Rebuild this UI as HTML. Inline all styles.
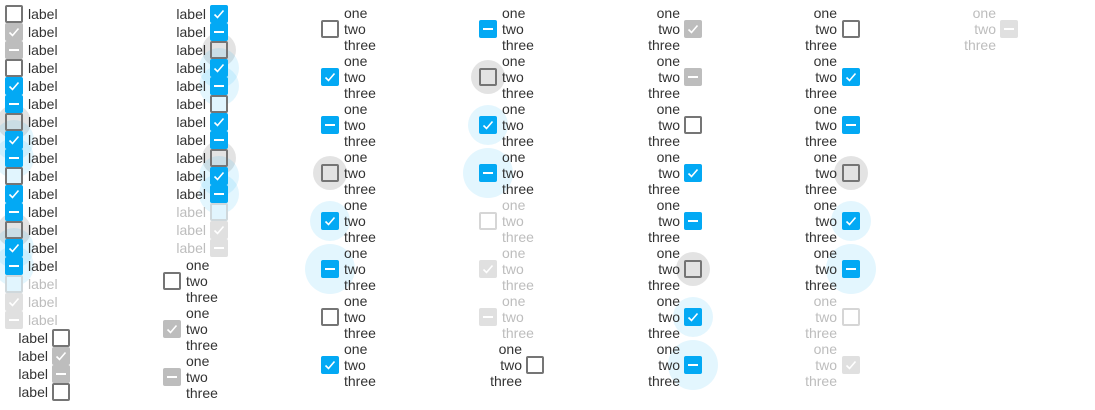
<!DOCTYPE html>
<html><head><meta charset="utf-8"><style>
html,body{margin:0;padding:0;background:#fff;width:1095px;height:410px;overflow:hidden;position:relative;font-family:"Liberation Sans",sans-serif;font-size:14px;color:#333}
.h{position:absolute;border-radius:50%}
.b{position:absolute;width:18px;height:18px;box-sizing:border-box;border-radius:2px}
.t{position:absolute;line-height:16px;white-space:nowrap}
.r{text-align:right}
.d{color:#bdbdbd}
svg{position:absolute;left:0;top:0}
</style></head><body>
<script>
var out=[];
var CK='<svg width="18" height="18"><polyline points="4.5,9.5 7.5,12.5 13.5,5.5" fill="none" stroke="#fff" stroke-width="1.6"/></svg>';
var DS='<svg width="18" height="18"><line x1="4" y1="9" x2="14" y2="9" stroke="#fff" stroke-width="2"/></svg>';
function box(x,yc,t,h){
 var y=yc-9;
 if(h){var s=h=='g'?34:(h=='b'?40:50);var c=h=='g'?'rgba(0,0,0,0.11)':'rgba(3,169,244,0.11)';
  out.push('<div class="h" style="left:'+(x+9-s/2)+'px;top:'+(yc-s/2)+'px;width:'+s+'px;height:'+s+'px;background:'+c+'"></div>');}
 var st='',inner='';
 if(t=='u')st='border:2px solid #757575;background:'+(h=='g'?'transparent':'#fff');
 else if(t=='lu')st='border:2px solid #757575;background:#e1f5fe';
 else if(t=='du')st='border:2px solid #cfd8dc;background:#e1f5fe';
 else if(t=='dw')st='border:2px solid #d6d6d6;background:#fff';
 else if(t=='c'){st='background:#03a9f4';inner=CK}
 else if(t=='i'){st='background:#03a9f4';inner=DS}
 else if(t=='gc'){st='background:#bdbdbd';inner=CK}
 else if(t=='gi'){st='background:#bdbdbd';inner=DS}
 else if(t=='dc'){st='background:#e0e0e0';inner=CK}
 else if(t=='di'){st='background:#e0e0e0';inner=DS}
 out.push('<div class="b" style="z-index:2;left:'+x+'px;top:'+y+'px;'+st+'">'+inner+'</div>');
}
function txt(x,y,s,cls,right){
 out.push('<div class="t '+(cls||'')+'" style="z-index:3;'+(right?'right:'+(1095-x)+'px':'left:'+x+'px')+';top:'+y+'px">'+s+'</div>');
}
var c1=[['u'],['gc'],['gi'],['u'],['c'],['i'],['u','g'],['c','b'],['i','b'],['lu'],['c'],['i'],['u','g'],['c','b'],['i','b'],['du',0,1],['dc',0,1],['di',0,1]];
c1.forEach(function(a,k){var yc=14+18*k;box(5,yc,a[0],a[1]);txt(28,yc-8,'label',a[2]?'d':'');});
[['u'],['gc'],['gi'],['u']].forEach(function(a,k){var yc=338+18*k;box(52,yc,a[0]);txt(48,yc-8,'label','',1);});
var c2=[['c'],['i'],['u','g'],['c','b'],['i','b'],['lu'],['c'],['i'],['u','g'],['c','b'],['i','b'],['du',0,1],['dc',0,1],['di',0,1]];
c2.forEach(function(a,k){var yc=14+18*k;box(210,yc,a[0],a[1]);txt(206,yc-8,'label',a[2]?'d':'',1);});
function three(x,yc,cls,right){txt(x,yc-24,'one<br>two<br>three',cls,right);}
[['u'],['gc'],['gi']].forEach(function(a,k){var yc=281+48*k;box(163,yc,a[0]);three(186,yc);});
[['u'],['c'],['i'],['u','g'],['c','b'],['i','B'],['u'],['c']].forEach(function(a,k){var yc=29+48*k;box(321,yc,a[0],a[1]);three(344,yc);});
[['i'],['u','g'],['c','b'],['i','B'],['dw',0,1],['dc',0,1],['di',0,1]].forEach(function(a,k){var yc=29+48*k;box(479,yc,a[0],a[1]);three(502,yc,a[2]?'d':'');});
box(526,365,'u');three(522,365,'r',1);
[['gc'],['gi'],['u'],['c'],['i'],['u','g'],['c','b'],['i','B']].forEach(function(a,k){var yc=29+48*k;box(684,yc,a[0],a[1]);three(680,yc,'r',1);});
[['u'],['c'],['i'],['u','g'],['c','b'],['i','B'],['dw',0,1],['dc',0,1]].forEach(function(a,k){var yc=29+48*k;box(842,yc,a[0],a[1]);three(837,yc,'r'+(a[2]?' d':''),1);});
box(1000,29,'di');three(996,29,'r d',1);
document.write(out.join(''));
</script>
</body></html>
